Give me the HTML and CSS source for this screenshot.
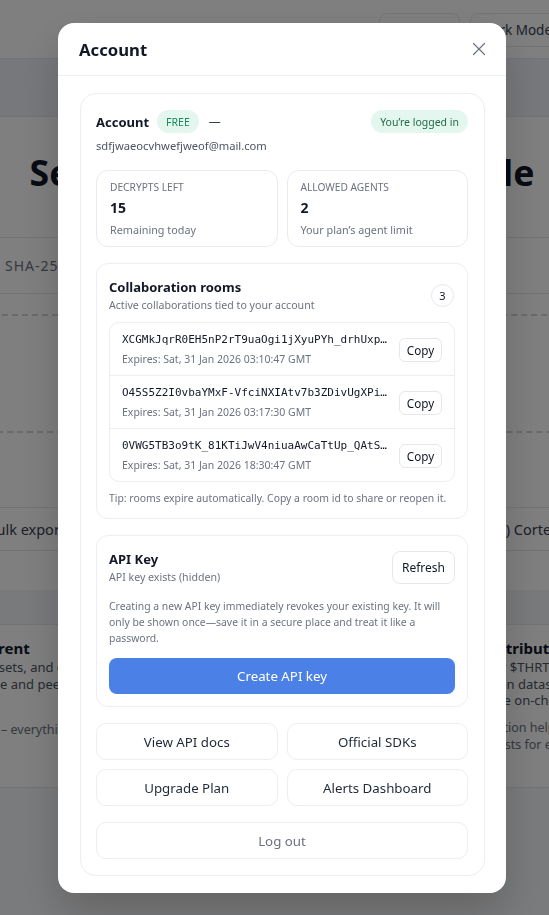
FILE: index.html
```html
<!DOCTYPE html>
<html lang="en">
<head>
<meta charset="utf-8">
<title>Account</title>
<link rel="stylesheet" href="styles.css">
</head>
<body>
<div class="page">
  <header class="topnav">
    <button class="nav-btn nav-btn-short">Pricing</button>
    <button class="nav-btn nav-btn-mode">Dark Mode</button>
  </header>
  <div class="subbar"></div>
  <main class="hero">
    <h1 class="hero-title">Send a Secure Encrypted File</h1>
    <div class="algo-row">SHA-256 · AES-256-GCM</div>
    <div class="dropzone"></div>
    <div class="feature-row">
      <span class="feature-left">Bulk export</span>
      <span class="feature-right">(2) Cortex</span>
    </div>
  </main>
  <section class="section-head"></section>
  <section class="info-grid">
    <div class="info info-left">
      <h3 class="info-title">Transparent</h3>
      <p class="info-text">Proofs, assets, and claims<br>Reviewable and peer-verified</p>
      <p class="info-note">No lock-in – everything is yours</p>
    </div>
    <div class="info info-right">
      <h3 class="info-title">Fair distribution</h3>
      <p class="info-text">Stake for $THRT tokens<br>Earned on datasets and<br>Are made on-chain</p>
      <p class="info-note">Contribution helps<br>Lower costs for everyone</p>
    </div>
  </section>
  <footer class="page-foot"></footer>
</div>

<div class="overlay">
  <div class="modal" role="dialog" aria-label="Account">
    <div class="modal-head">
      <h2 class="modal-title">Account</h2>
      <button class="close-btn" aria-label="Close">
        <svg width="14" height="14" viewBox="0 0 14 14"><path d="M1.5 1.5l11 11M12.5 1.5l-11 11" stroke="#6b7280" stroke-width="1.2" stroke-linecap="round" fill="none"/></svg>
      </button>
    </div>
    <div class="modal-body">
      <div class="panel">
        <section class="acct">
          <div class="acct-row">
            <span class="acct-label">Account</span>
            <span class="pill pill-plan">FREE</span>
            <span class="acct-dash">—</span>
            <span class="pill pill-status">You’re logged in</span>
          </div>
          <div class="acct-email">sdfjwaeocvhwefjweof@mail.com</div>
          <div class="stats">
            <div class="stat">
              <div class="stat-label">Decrypts left</div>
              <div class="stat-value">15</div>
              <div class="stat-note">Remaining today</div>
            </div>
            <div class="stat">
              <div class="stat-label">Allowed agents</div>
              <div class="stat-value">2</div>
              <div class="stat-note">Your plan’s agent limit</div>
            </div>
          </div>
        </section>

        <section class="box">
          <div class="box-head">
            <div>
              <h3 class="box-title">Collaboration rooms</h3>
              <p class="box-sub">Active collaborations tied to your account</p>
            </div>
            <span class="count">3</span>
          </div>
          <ul class="room-list">
            <li class="room">
              <div class="room-info">
                <div class="room-id">XCGMkJqrR0EH5nP2rT9uaOgi1jXyuPYh_drhUxpK3aQzW</div>
                <div class="room-exp">Expires: Sat, 31 Jan 2026 03:10:47 GMT</div>
              </div>
              <button class="btn-sm">Copy</button>
            </li>
            <li class="room">
              <div class="room-info">
                <div class="room-id">O45S5Z2I0vbaYMxF-VfciNXIAtv7b3ZDivUgXPiLq8rT</div>
                <div class="room-exp">Expires: Sat, 31 Jan 2026 03:17:30 GMT</div>
              </div>
              <button class="btn-sm">Copy</button>
            </li>
            <li class="room">
              <div class="room-info">
                <div class="room-id">0VWG5TB3o9tK_81KTiJwV4niuaAwCaTtUp_QAtSm2eXk</div>
                <div class="room-exp">Expires: Sat, 31 Jan 2026 18:30:47 GMT</div>
              </div>
              <button class="btn-sm">Copy</button>
            </li>
          </ul>
          <p class="tip">Tip: rooms expire automatically. Copy a room id to share or reopen it.</p>
        </section>

        <section class="box">
          <div class="box-head">
            <div>
              <h3 class="box-title">API Key</h3>
              <p class="box-sub">API key exists (hidden)</p>
            </div>
            <button class="btn-refresh">Refresh</button>
          </div>
          <p class="api-text">Creating a new API key immediately revokes your existing key. It will only be shown once—save it in a secure place and treat it like a password.</p>
          <button class="btn-primary">Create API key</button>
        </section>

        <div class="actions">
          <button class="btn-outline">View API docs</button>
          <button class="btn-outline">Official SDKs</button>
          <button class="btn-outline">Upgrade Plan</button>
          <button class="btn-outline">Alerts Dashboard</button>
        </div>

        <button class="btn-outline btn-logout">Log out</button>
      </div>
    </div>
  </div>
</div>
</body>
</html>
```

FILE: styles.css
```css
* { box-sizing: border-box; }

html { overflow: hidden; }

body {
  margin: 0;
  width: 564px;
  font-family: "Noto Sans", "Open Sans", sans-serif;
  color: #111827;
  background: #ffffff;
}

button { font-family: inherit; cursor: pointer; }

/* ---------- background page ---------- */
.topnav {
  height: 59px;
  border-bottom: 1px solid #e5e7eb;
  display: flex;
  justify-content: flex-end;
  align-items: flex-start;
  gap: 10px;
  padding-top: 13px;
}
.nav-btn {
  height: 34px;
  border: 1px solid #e5e7eb;
  border-radius: 8px;
  background: #fff;
  font-size: 13.5px;
  color: #374151;
  padding: 0;
}
.nav-btn-short { width: 81px; }
.nav-btn-mode { width: 94px; }

.subbar {
  height: 58px;
  background: #eef1f6;
  border-bottom: 1px solid #e5e7eb;
}

.hero-title {
  margin: 33px 0 0;
  text-align: center;
  font-size: 35.6px;
  line-height: 44px;
  font-weight: 700;
  color: #111827;
  white-space: nowrap;
}

.algo-row {
  margin-top: 43px;
  height: 57px;
  border-top: 1px solid #e5e7eb;
  border-bottom: 1px solid #e5e7eb;
  display: flex;
  align-items: center;
  padding-left: 5px;
  font-size: 14px;
  letter-spacing: 1px;
  color: #6b7280;
  white-space: nowrap;
}

.dropzone {
  margin: 20px -20px 0;
  height: 119px;
  border: 2px dashed #d1d5db;
  border-radius: 12px;
}

.feature-row {
  margin: 74px 0 0 -13px;
  height: 44px;
  border-top: 1px solid #e5e7eb;
  border-bottom: 1px solid #e5e7eb;
  display: flex;
  align-items: center;
  font-size: 14.5px;
  color: #374151;
  white-space: nowrap;
}
.feature-left { flex: 0 0 506px; }

.section-head {
  margin-top: 39px;
  height: 35px;
  background: #f3f4f6;
  border-bottom: 1px solid #e5e7eb;
}

.info-grid {
  height: 163px;
  display: flex;
  margin-left: -61px;
  border-bottom: 1px solid #e5e7eb;
  white-space: nowrap;
}
.info-left { flex: 0 0 513px; }
.info-right { flex: 1; }
.info { padding-top: 12px; }
.info-title {
  margin: 0;
  font-size: 15px;
  line-height: 22px;
  font-weight: 700;
  color: #111827;
}
.info-text {
  margin: 0;
  font-size: 13px;
  line-height: 17px;
  color: #4b5563;
}
.info-note {
  margin: 0;
  font-size: 12.5px;
  line-height: 17px;
  color: #6b7280;
}
.info-left .info-note { margin-top: 28px; }
.info-right .info-text { line-height: 16.5px; }
.info-right .info-note { margin-top: 10px; }

.page-foot {
  height: 130px;
  background: #f5f6f8;
}

/* ---------- overlay + modal ---------- */
.overlay {
  position: fixed;
  top: 0;
  left: 0;
  width: 564px;
  height: 100%;
  background: rgba(0, 0, 0, 0.5);
  display: flex;
  justify-content: center;
  align-items: flex-start;
  padding-top: 23px;
}

.modal {
  width: 448px;
  background: #ffffff;
  border-radius: 16px;
  box-shadow: 0 20px 40px rgba(0, 0, 0, 0.18);
}

.modal-head {
  height: 53px;
  display: flex;
  align-items: center;
  justify-content: space-between;
  padding: 0 20px 0 21px;
  border-bottom: 1px solid #eceef1;
}
.modal-title {
  margin: 0;
  font-size: 16.7px;
  font-weight: 700;
  color: #111827;
}
.close-btn {
  width: 14px;
  height: 14px;
  padding: 0;
  border: 0;
  background: transparent;
  display: flex;
}

.modal-body { padding: 17px 21px 17px 22px; }

.panel {
  border: 1px solid #eceef1;
  border-radius: 16px;
  padding: 16px 16px 16px 15px;
  display: flex;
  flex-direction: column;
  gap: 16px;
}

/* account */
.acct-row {
  height: 23px;
  display: flex;
  align-items: center;
}
.acct-label {
  font-size: 13px;
  font-weight: 700;
  color: #111827;
}
.pill {
  height: 23px;
  border-radius: 12px;
  display: inline-flex;
  align-items: center;
  padding: 0 9px;
  font-size: 10.5px;
  background: #e4f7ee;
}
.pill-plan { margin-left: 8px; color: #1b8a5c; }
.acct-dash { margin-left: 10px; font-size: 12px; color: #374151; }
.pill-status { margin-left: auto; color: #1f6b4b; }

.acct-email {
  margin-top: 4px;
  font-size: 11.2px;
  line-height: 18px;
  color: #4b5563;
}

.stats {
  margin-top: 15px;
  display: grid;
  grid-template-columns: 1fr 1fr;
  gap: 9px;
}
.stat {
  height: 77px;
  border: 1px solid #e9ebee;
  border-radius: 12px;
  padding: 9px 13px 8px;
}
.stat-label {
  font-size: 10.2px;
  line-height: 14px;
  text-transform: uppercase;
  color: #6b7280;
}
.stat-value {
  margin-top: 4px;
  font-size: 14px;
  line-height: 20px;
  font-weight: 700;
  color: #111827;
}
.stat-note {
  margin-top: 4px;
  font-size: 10.8px;
  line-height: 16px;
  color: #6b7280;
}

/* boxes */
.box {
  border: 1px solid #eceef1;
  border-radius: 12px;
  padding: 13px 12px 12px;
}
.box-head {
  display: flex;
  align-items: center;
  justify-content: space-between;
}
.box-title {
  margin: 0;
  font-size: 13px;
  line-height: 20px;
  font-weight: 700;
  color: #111827;
}
.box-sub {
  margin: 0;
  font-size: 10.6px;
  line-height: 16px;
  color: #6b7280;
}
.count {
  width: 23px;
  height: 23px;
  margin-right: 1px;
  border: 1px solid #e5e7eb;
  border-radius: 50%;
  display: flex;
  align-items: center;
  justify-content: center;
  font-size: 11px;
  color: #111827;
}

.room-list {
  margin: 9px 0 0;
  padding: 0;
  list-style: none;
  border: 1px solid #eceef1;
  border-radius: 10px;
}
.room {
  display: flex;
  align-items: center;
  gap: 10px;
  padding: 9px 12px 8px;
}
.room + .room { border-top: 1px solid #eceef1; }
.room-info { flex: 1; min-width: 0; }
.room-id {
  font-family: "DejaVu Sans Mono", "Liberation Mono", monospace;
  font-size: 11px;
  line-height: 16px;
  color: #111827;
  white-space: nowrap;
  overflow: hidden;
  text-overflow: ellipsis;
}
.room-exp {
  margin-top: 3px;
  font-size: 10.5px;
  line-height: 16px;
  color: #6b7280;
  white-space: nowrap;
}
.btn-sm {
  flex: 0 0 43px;
  height: 24px;
  padding: 0;
  border: 1px solid #e5e7eb;
  border-radius: 6px;
  background: #fff;
  font-size: 11.7px;
  color: #111827;
}

.tip {
  margin: 8px 0 0;
  font-size: 10.4px;
  line-height: 16px;
  color: #6b7280;
}

.btn-refresh {
  width: 63px;
  height: 33px;
  padding: 0;
  border: 1px solid #e5e7eb;
  border-radius: 8px;
  background: #fff;
  font-size: 12px;
  color: #111827;
}

.api-text {
  margin: 13px 0 0;
  font-size: 10.4px;
  line-height: 16px;
  color: #6b7280;
}

.btn-primary {
  margin-top: 12px;
  width: 100%;
  height: 36px;
  border: 0;
  border-radius: 8px;
  background: #4b80e6;
  color: #ffffff;
  font-size: 13.3px;
}

/* actions */
.actions {
  display: grid;
  grid-template-columns: 1fr 1fr;
  gap: 9px;
}
.btn-outline {
  height: 37px;
  border: 1px solid #eceef1;
  border-radius: 10px;
  background: #fff;
  font-size: 13.3px;
  color: #1f2937;
}
.btn-logout { width: 100%; color: #6b7280; }
```
